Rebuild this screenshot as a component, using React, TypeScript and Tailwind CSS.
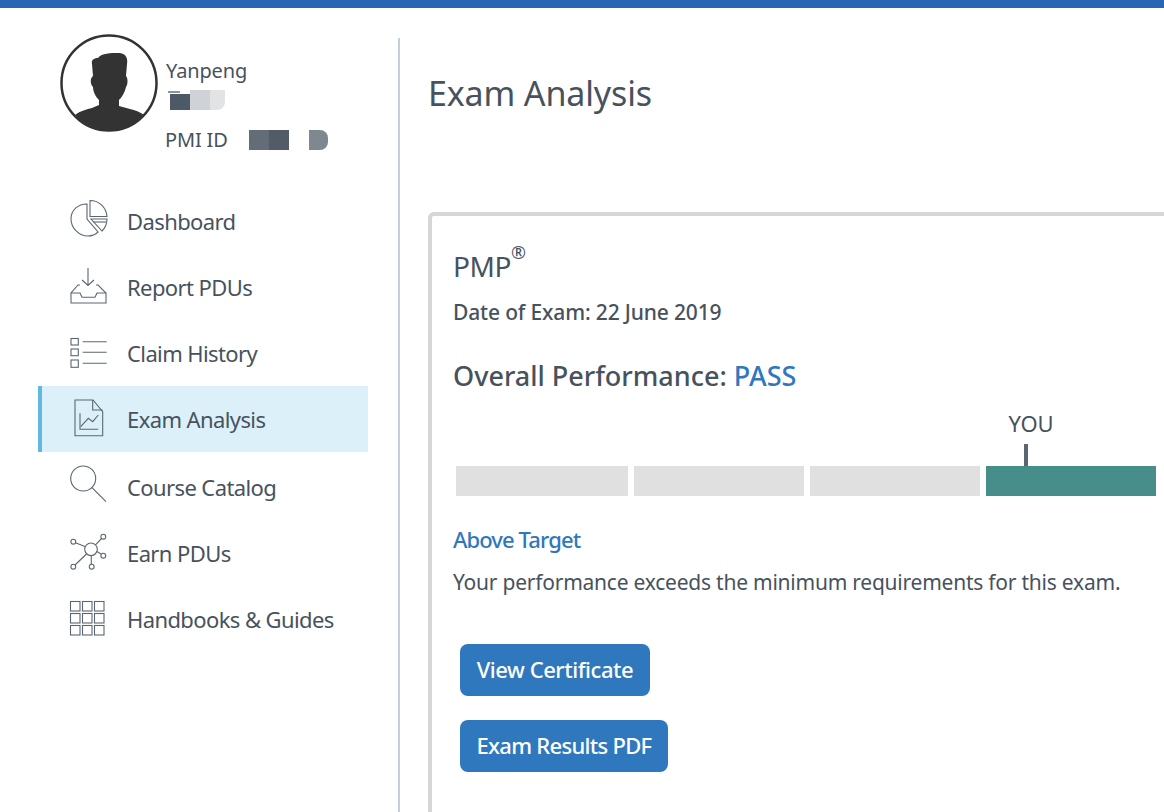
import type { ReactNode } from "react";

const Icon = ({ children }: { children: ReactNode }) => (
  <svg
    viewBox="0 0 38 38"
    className="w-[38px] h-[38px] shrink-0 -translate-y-[2px] overflow-visible"
    fill="none"
    stroke="#5b6770"
    strokeWidth="1.1"
  >
    {children}
  </svg>
);

const navItems: { label: string; active?: boolean; height: string; icon: ReactNode }[] = [
  {
    label: "Dashboard",
    height: "h-[66px]",
    icon: (
      <>
        <path d="M17 4C8 4 1 10 1 19c0 9 8 17 17 17 4 0 8-2 10-4L17 19Z" />
        <path d="M20 .5V16.500H37A17 17 0 0 0 20 .5Z" />
        <path d="M21 19H37c0 5-2 9-5 12Z" />
        <path d="M23.500 22H36" />
      </>
    ),
  },
  {
    label: "Report PDUs",
    height: "h-[66px]",
    icon: (
      <>
        <path d="M18 2v17M12 14l6 5.500 6-5.500" />
        <path d="M10 19H8L1 27v10h35V27l-8-8h-2" />
        <path d="M1 27h9l2 4.300h13l2-4.300h9" />
      </>
    ),
  },
  {
    label: "Claim History",
    height: "h-[66px]",
    icon: (
      <>
        <rect x="1" y="6.500" width="7.300" height="6.500" />
        <rect x="1" y="17" width="7.300" height="6.700" />
        <rect x="1" y="28" width="7.300" height="7.300" />
        <path d="M12.700 9.700h24M12.700 20.300h24M12.700 31.300h24" />
      </>
    ),
  },
  {
    label: "Exam Analysis",
    active: true,
    height: "h-[66px]",
    icon: (
      <>
        <path d="M5 2h18l9.700 11.700V37.700H5Z" />
        <path d="M22.700 2v10h10" />
        <path d="M10 15.300v16h18.300" />
        <path d="M10.700 28.700l7.600-8.400 4.400 3.400 5.600-6.700" />
      </>
    ),
  },
  {
    label: "Course Catalog",
    height: "h-[70px]",
    icon: (
      <>
        <circle cx="13.200" cy="12.500" r="12.500" />
        <path d="M21.700 21.300L36 35.700" />
      </>
    ),
  },
  {
    label: "Earn PDUs",
    height: "h-[62px]",
    icon: (
      <>
        <circle cx="21" cy="17.300" r="6.300" />
        <circle cx="3.300" cy="9.700" r="2.400" />
        <circle cx="33.300" cy="4.700" r="2.400" />
        <circle cx="33.300" cy="23.700" r="2.400" />
        <circle cx="3.300" cy="34.700" r="2.400" />
        <circle cx="21.700" cy="34.700" r="2.400" />
        <path d="M5.500 10.700l10 4M25.500 12.800l6-6.300M27 19.500l4 2.500M16.500 22L5 33M21.300 23.600v8.700" />
      </>
    ),
  },
  {
    label: "Handbooks & Guides",
    height: "h-[70px]",
    icon: (
      <>
        {[3.500, 15.500, 27.500].map((y) =>
          [.5, 12.500, 24.500].map((x) => <rect key={`${x}-${y}`} x={x} y={y} width="9.500" height="9.500" />),
        )}
      </>
    ),
  },
];

const App = () => {
  return (
    <div className="h-[812px] overflow-hidden bg-white text-[#47525d] font-['Noto_Sans',sans-serif]">
      <div className="h-2 bg-[#2566b5]" />
      <div className="flex pt-[30px] h-[804px]">
        <aside className="w-[362px] ml-[38px] border-r-2 border-[#c3cfdb] shrink-0">
          <div className="flex pl-[22px]">
            <svg viewBox="0 0 98 98" className="w-[98px] h-[98px] shrink-0 -mt-[4px]">
              <circle cx="49" cy="49" r="47.500" fill="none" stroke="#333" strokeWidth="2.500" />
              <path
                d="M38 24C42 19 50 19 60 19C66 20 68 24 67 30L66 42C68 44 68 50 66 53C65 58 62 63 59 66L59 72L70 75C75 76 80 78 84 81A47 47 0 0 1 15 81C20 77 27 75 32 74L39 71L39 66C36 63 33 58 33 53C30 50 30 44 33 42L32 30C31 26 34 24 38 24Z"
                fill="#333"
              />
            </svg>
            <div className="ml-[8px] pt-[20px] text-[20px] leading-[26px] tracking-[-0.15px]">
              <div>Yanpeng</div>
              <div className="flex mt-[6px] h-[20px] ml-[4px]">
                <div className="w-[20px]">
                  <div className="w-[12px] h-[2px] mt-[1px] mb-[1px] -ml-[2px] bg-[#8a929a]" />
                  <div className="w-[20px] h-[16px] bg-[#4d5966]" />
                </div>
                <div className="w-[20px] h-[20px] bg-[#cfd2d6]" />
                <div className="w-[15px] h-[20px] bg-[#e2e3e5] rounded-br-[8px]" />
              </div>
              <div className="flex items-center mt-[17px] h-[26px] -ml-[1px]">
                <span>PMI ID</span>
                <div className="ml-[21px] w-[20px] h-[20px] bg-[#626d77]" />
                <div className="w-[20px] h-[20px] bg-[#515c67]" />
                <div className="ml-[20px] w-[19px] h-[20px] bg-[#7f8790] rounded-r-[8px]" />
              </div>
            </div>
          </div>
          <nav className="mt-[35px] w-[330px]">
            {navItems.map((item) => (
              <a
                key={item.label}
                className={`flex items-center ${item.height} text-[22px] tracking-[-0.6px] ${
                  item.active ? "bg-[#dcf0fa] border-l-4 border-[#61b8e0] pl-[28px]" : "pl-[32px]"
                }`}
              >
                <Icon>{item.icon}</Icon>
                <span className="ml-[19px]">{item.label}</span>
              </a>
            ))}
          </nav>
        </aside>
        <main className="flex-1 pl-[28px] min-w-0">
          <h1 className="text-[34px] leading-[46px] mt-[32px] tracking-[-0.15px]">Exam Analysis</h1>
          <section className="mt-[96px] w-[760px] h-[640px] border-4 border-[#d6d6d6] rounded-[6px] pl-[21px] pt-[30px]">
            <div className="text-[28px] leading-[40px] tracking-[-0.4px]">
              PMP<sup className="text-[18px] leading-none align-[9px]">®</sup>
            </div>
            <p className="mt-[12px] text-[21px] leading-[28px] font-medium tracking-[-0.15px]">Date of Exam: 22 June 2019</p>
            <h2 className="mt-[31px] text-[27px] leading-[38px] font-medium tracking-[0px]">
              Overall Performance: <span className="text-[#2f78bd]">PASS</span>
            </h2>
            <div className="mt-[13px] w-[703px] pl-[3px]">
              <div className="ml-[525px] w-[100px] text-center text-[22px] leading-[30px] tracking-[-0.1px]">YOU</div>
              <div className="ml-[568px] mt-[6px] w-[4px] h-[22px] bg-[#5b6770]" />
              <div className="flex gap-[6px] h-[30px]">
                <div className="w-[172px] bg-[#e0e0e0]" />
                <div className="w-[170px] bg-[#e0e0e0]" />
                <div className="w-[170px] bg-[#e0e0e0]" />
                <div className="w-[170px] bg-[#478d8a]" />
              </div>
            </div>
            <div className="mt-[26px] text-[22px] leading-[34px] font-medium tracking-[-0.9px] text-[#2f78bd]">Above Target</div>
            <p className="mt-[12px] text-[21px] leading-[28px] tracking-[-0.23px]">
              Your performance exceeds the minimum requirements for this exam.
            </p>
            <div className="mt-[48px] ml-[7px] flex flex-col items-start gap-[24px]">
              <button className="h-[52px] w-[190px] pb-[2px] rounded-[8px] bg-[#2f78bd] text-white text-[22px] font-medium tracking-[-0.45px]">
                View Certificate
              </button>
              <button className="h-[52px] w-[208px] pb-[2px] rounded-[8px] bg-[#2f78bd] text-white text-[22px] font-medium tracking-[-0.7px]">
                Exam Results PDF
              </button>
            </div>
          </section>
        </main>
      </div>
    </div>
  );
};

export default App;
